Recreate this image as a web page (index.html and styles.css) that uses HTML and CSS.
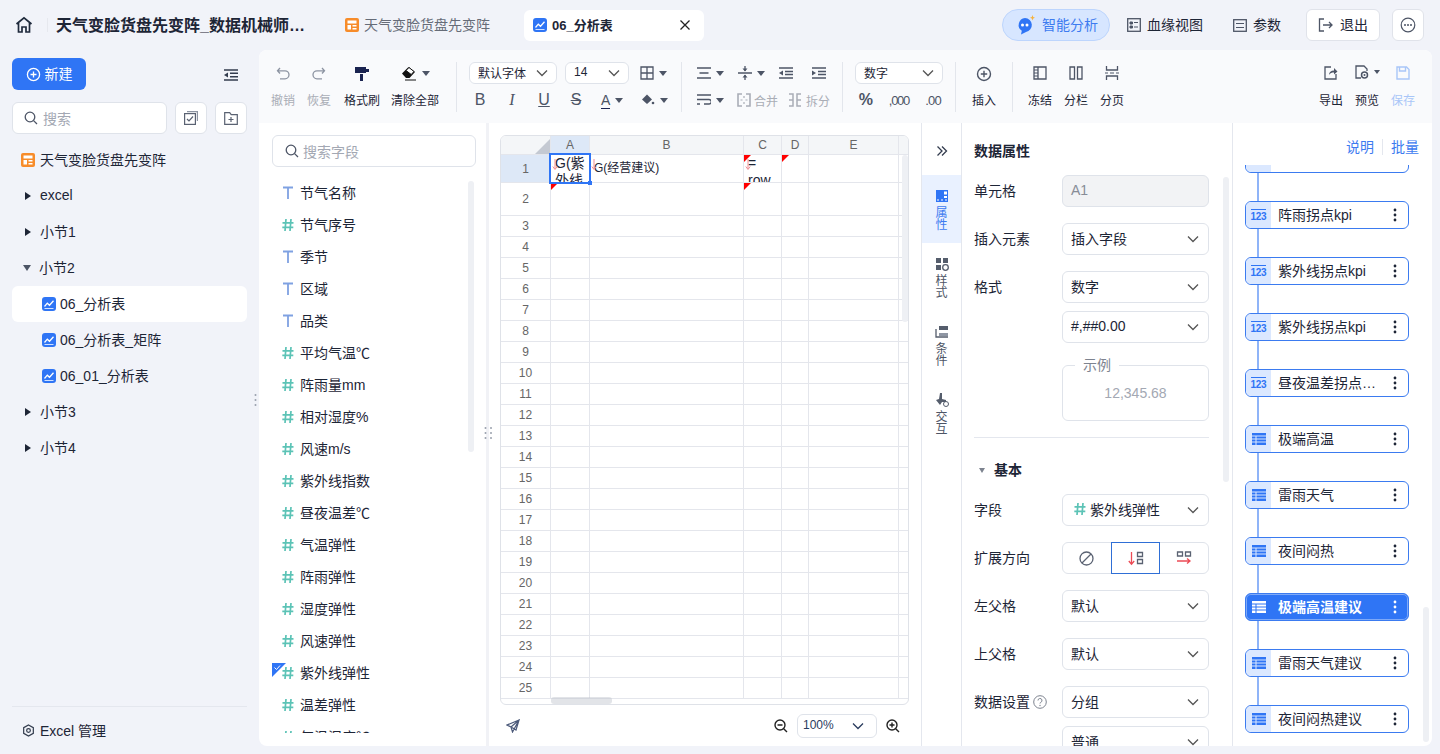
FILE: index.html
```html
<!DOCTYPE html>
<html lang="zh-CN">
<head>
<meta charset="utf-8">
<title>06_分析表</title>
<link rel="stylesheet" href="styles.css">
</head>
<body>
<svg class="defs" xmlns="http://www.w3.org/2000/svg">
  <symbol id="chev" viewBox="0 0 14 14"><path d="M2 4.500 7 9.500 12 4.500" fill="none" stroke="currentColor" stroke-width="1.300"/></symbol>
  <symbol id="search" viewBox="0 0 14 14"><circle cx="6" cy="6" r="4.800" fill="none" stroke="currentColor" stroke-width="1.300"/><path d="M9.600 9.600 13 13" stroke="currentColor" stroke-width="1.300"/></symbol>
  <symbol id="orange" viewBox="0 0 14 14"><rect width="14" height="14" rx="2" fill="#f78c2a"/><path d="M2.500 2.500h9v3h-9zM2.500 7h3.500v4.500h-3.500zM7.500 7h4v1.500h-4zM7.500 10h4v1.500h-4z" fill="#fff"/></symbol>
  <symbol id="chart" viewBox="0 0 14 14"><rect width="14" height="14" rx="3" fill="#2f75f5"/><path d="M2.500 9.500 5.300 6.200 7.500 8.300 11.500 3.800" fill="none" stroke="#fff" stroke-width="1.300"/><path d="M2.500 11.500h9" stroke="#cfe0ff" stroke-width="1"/></symbol>
  <symbol id="T" viewBox="0 0 12 14"><path d="M1 1.500h10M6 1.500V13" fill="none" stroke="#7fa1e2" stroke-width="1.800"/></symbol>
  <symbol id="hash" viewBox="0 0 12 14"><path d="M4 1 3 13M9 1 8 13M.5 4.800h11M.3 9.300h11" fill="none" stroke="#5cc3b6" stroke-width="1.700"/></symbol>
  <symbol id="dots" viewBox="0 0 4 14"><circle cx="2" cy="2" r="1.400" fill="currentColor"/><circle cx="2" cy="7" r="1.400" fill="currentColor"/><circle cx="2" cy="12" r="1.400" fill="currentColor"/></symbol>
  <symbol id="tbl" viewBox="0 0 14 12"><path d="M0 0h14v2.500H0zM0 3.500h3.500v2H0zM4.500 3.500H14v2H4.500zM0 6.500h3.500v2H0zM4.500 6.500H14v2H4.500zM0 9.500h3.500V12H0zM4.500 9.500H14V12H4.500z" fill="currentColor"/></symbol>
  <symbol id="darrow" viewBox="0 0 6 12"><path d="M3 0v10M.8 7.500 3 10.500 5.200 7.500" fill="none" stroke="#ee8f97" stroke-width="1"/></symbol>
  <symbol id="plus-c" viewBox="0 0 16 16"><circle cx="8" cy="8" r="6.500" fill="none" stroke="currentColor" stroke-width="1.400"/><path d="M8 4.800v6.400M4.800 8h6.400" stroke="currentColor" stroke-width="1.400"/></symbol>
</svg>

<div class="app">
  <header class="header">
    <svg class="home" width="18" height="18" viewBox="0 0 18 18"><path d="M1.500 8 9 1.800 16.500 8M3.500 7v9h3.500v-5h4v5h3.500V7" fill="none" stroke="#1f2a3c" stroke-width="1.700"/></svg>
    <span class="hsep"></span>
    <div class="title">天气变脸货盘先变阵_数据机械师…</div>
    <div class="tab"><svg width="14" height="14"><use href="#orange"/></svg><span>天气变脸货盘先变阵</span></div>
    <div class="tab tab-active"><svg width="14" height="14"><use href="#chart"/></svg><span>06_分析表</span>
      <svg class="tab-x" width="10" height="10" viewBox="0 0 10 10"><path d="M.5.500l9 9M9.500.500l-9 9" stroke="#222" stroke-width="1.300"/></svg></div>
    <div class="hright">
      <div class="ai">
        <svg width="20" height="20" viewBox="0 0 20 20"><path d="M9 3a7 7 0 0 1 1 13.900L5 19.500l.8-3.700A7 7 0 0 1 9 3z" fill="#2f75f5"/><circle cx="6.500" cy="10" r="1.500" fill="#fff"/><circle cx="11" cy="10" r="1.500" fill="#fff"/><path d="M16.500 0l.7 2 1.800.7-1.800.7-.7 2-.7-2-1.800-.7 1.800-.7z" fill="#f6b23c"/></svg>
        <span>智能分析</span>
      </div>
      <div class="hlink hl-1"><svg width="14" height="14" viewBox="0 0 14 14"><rect x=".7" y=".7" width="12.600" height="12.600" fill="none" stroke="#4d5566" stroke-width="1.300"/><path d="M3 4h2.500v2H3zM3 8h2.500v2H3zM7 4.500h4M7 9h4" stroke="#4d5566" fill="#4d5566"/></svg><span>血缘视图</span></div>
      <div class="hlink hl-2"><svg width="14" height="13" viewBox="0 0 14 13"><rect x=".7" y=".7" width="12.600" height="11.600" fill="none" stroke="#4d5566" stroke-width="1.300"/><path d="M3 4.500h8M3 8.500h8" stroke="#4d5566" stroke-width="1.200"/></svg><span>参数</span></div>
      <button class="hbtn hbtn-exit"><svg width="16" height="14" viewBox="0 0 16 14"><path d="M6 1H1.500v12H6M5 7h9M11 4l3 3-3 3" fill="none" stroke="#4d5566" stroke-width="1.300"/></svg><span>退出</span></button>
      <button class="hbtn hbtn-more"><svg width="16" height="16" viewBox="0 0 16 16"><circle cx="8" cy="8" r="6.800" fill="none" stroke="#4d5566" stroke-width="1.200"/><circle cx="5" cy="8" r="1" fill="#4d5566"/><circle cx="8" cy="8" r="1" fill="#4d5566"/><circle cx="11" cy="8" r="1" fill="#4d5566"/></svg></button>
    </div>
  </header>

  <div class="main">
    <aside class="sidebar">
      <div class="side-top">
        <button class="new-btn"><svg width="15" height="15"><use href="#plus-c"/></svg><span>新建</span></button>
        <svg width="14" height="12" viewBox="0 0 14 12" class="collapse"><path d="M0 1h14M6 4.300h8M6 7.700h8M0 11h14" stroke="#333c4e" stroke-width="1.400"/><path d="M4 3.500v5L0 6z" fill="#333c4e"/></svg>
      </div>
      <div class="side-search">
        <div class="search side-input"><svg width="14" height="14"><use href="#search"/></svg><span>搜索</span></div>
        <button class="sq"><svg width="14" height="14" viewBox="0 0 14 14"><rect x=".6" y="2.600" width="10.800" height="10.800" fill="none" stroke="#5a6272" stroke-width="1.200"/><path d="M3 8l2 2 4-4.500" fill="none" stroke="#5a6272" stroke-width="1.200"/><path d="M3 .6h10.400V10" fill="none" stroke="#8d94a2" stroke-width="1.200"/></svg></button>
        <button class="sq"><svg width="14" height="13" viewBox="0 0 14 13"><path d="M.7.700h5l1.500 2h6.100v9.600H.7z" fill="none" stroke="#5a6272" stroke-width="1.200"/><path d="M7 5v5M4.500 7.500h5" stroke="#5a6272" stroke-width="1.200"/></svg></button>
      </div>
      <ul class="tree">
        <li class="ti ti-root"><svg width="14" height="14"><use href="#orange"/></svg><span>天气变脸货盘先变阵</span></li>
        <li class="ti"><i class="tri"></i><span>excel</span></li>
        <li class="ti"><i class="tri"></i><span>小节1</span></li>
        <li class="ti"><i class="tri tri-down"></i><span>小节2</span></li>
        <li class="ti ti-child ti-on"><svg width="14" height="14"><use href="#chart"/></svg><span>06_分析表</span></li>
        <li class="ti ti-child"><svg width="14" height="14"><use href="#chart"/></svg><span>06_分析表_矩阵</span></li>
        <li class="ti ti-child"><svg width="14" height="14"><use href="#chart"/></svg><span>06_01_分析表</span></li>
        <li class="ti"><i class="tri"></i><span>小节3</span></li>
        <li class="ti"><i class="tri"></i><span>小节4</span></li>
      </ul>
      <div class="side-foot"><svg width="13" height="13" viewBox="0 0 14 14"><path d="M7 1l5.200 3v6L7 13l-5.200-3V4z" fill="none" stroke="#333c4e" stroke-width="1.300"/><circle cx="7" cy="7" r="2" fill="none" stroke="#333c4e" stroke-width="1.300"/></svg><span>Excel 管理</span></div>
      <svg class="grip grip-side" width="3" height="14" viewBox="0 0 3 14"><g fill="#9aa1ad"><circle cx="1.500" cy="2" r="1"/><circle cx="1.500" cy="7" r="1"/><circle cx="1.500" cy="12" r="1"/></g></svg>
    </aside>

    <section class="card">
      <div class="toolbar">
        <div class="tg tg1">
          <div class="tool off"><svg width="16" height="16" viewBox="0 0 16 16"><path d="M5 2 2.500 4.800 5 7.500M2.500 4.800H10a4 4 0 0 1 0 8H5" fill="none" stroke="#8d94a2" stroke-width="1.300"/></svg><span>撤销</span></div>
          <div class="tool off"><svg width="16" height="16" viewBox="0 0 16 16"><path d="M11 2l2.500 2.800L11 7.500M13.500 4.800H6a4 4 0 0 0 0 8h5" fill="none" stroke="#8d94a2" stroke-width="1.300"/></svg><span>恢复</span></div>
          <div class="tool tool-brush"><svg width="16" height="16" viewBox="0 0 16 16"><path d="M1 1h11v2h3v3H12v1H1zM6 8h3v7H6z" fill="#1a2350"/></svg><span>格式刷</span></div>
          <div class="tool tool-wide"><div class="ticon"><svg width="16" height="16" viewBox="0 0 16 16"><path d="M1 8.500 7.500 2l6.500 5-5.500 6H5z" fill="#111"/><path d="M5 5.500 8 2.500l5 4-2.800 3z" fill="#fff" stroke="#111"/><path d="M4 15h11" stroke="#111"/></svg><i class="caret"></i></div><span>清除全部</span></div>
        </div>
        <span class="sep"></span>
        <div class="tg tg2">
          <div class="trow">
            <div class="tsel w88"><span>默认字体</span><svg width="14" height="14"><use href="#chev"/></svg></div>
            <div class="tsel w64"><span>14</span><svg width="14" height="14"><use href="#chev"/></svg></div>
            <div class="ticon ml10"><svg width="14" height="14" viewBox="0 0 14 14"><path d="M1 1h12v12H1zM7 1v12M1 7h12" fill="none" stroke="#4d5566" stroke-width="1.300"/></svg><i class="caret"></i></div>
          </div>
          <div class="trow trow2">
            <span class="fmt">B</span><span class="fmt fmt-i">I</span><span class="fmt fmt-u">U</span><span class="fmt fmt-s">S</span>
            <div class="ticon w30"><span class="fmt-a">A</span><i class="caret"></i></div>
            <div class="ticon fill"><svg width="14" height="14" viewBox="0 0 14 14"><path d="M1 6.500 6 1.500l5 5-5 4.500z" fill="#4d5566"/><circle cx="12" cy="10" r="1.300" fill="#4d5566"/></svg><i class="caret"></i></div>
          </div>
        </div>
        <span class="sep"></span>
        <div class="tg tg3">
          <div class="trow row3a">
            <div class="ticon"><svg width="14" height="12" viewBox="0 0 14 12"><path d="M0 1h14M2.500 6h9M0 11h14" stroke="#4d5566" stroke-width="1.300"/></svg><i class="caret"></i></div>
            <div class="ticon"><svg width="14" height="14" viewBox="0 0 14 14"><path d="M0 7h14M7 0v5M7 9v5" stroke="#4d5566" stroke-width="1.300"/><path d="M4.500 2.500h5L7 5.500zM4.500 11.500h5L7 8.500z" fill="#4d5566"/></svg><i class="caret"></i></div>
            <svg class="ind" width="14" height="12" viewBox="0 0 14 12"><path d="M0 1h14M6 4.500h8M6 7.500h8M0 11h14" stroke="#4d5566" stroke-width="1.300"/><path d="M4 3.500v5L0 6z" fill="#4d5566"/></svg>
            <svg class="ind" width="14" height="12" viewBox="0 0 14 12"><path d="M0 1h14M6 4.500h8M6 7.500h8M0 11h14" stroke="#4d5566" stroke-width="1.300"/><path d="M0 3.500v5L4 6z" fill="#4d5566"/></svg>
          </div>
          <div class="trow row3b">
            <div class="ticon"><svg width="14" height="12" viewBox="0 0 14 12"><path d="M0 1h14M0 5.500h12a2.200 2.200 0 0 1 0 4.500H7M0 10h3" fill="none" stroke="#4d5566" stroke-width="1.300"/></svg><i class="caret"></i></div>
            <div class="ticon merge off"><svg width="14" height="14" viewBox="0 0 14 14"><path d="M5 1H1v12h4M9 1h4v12H9" fill="none" stroke="currentColor" stroke-width="1.600"/><path d="M3.500 7h2M8.500 7h2M7 3v2M7 9v2" stroke="currentColor" stroke-width="1.200"/></svg><span>合并</span></div>
            <div class="ticon split off"><svg width="14" height="14" viewBox="0 0 14 14"><path d="M1 1h4v12H1M1 7h4M13 1H9v12h4M9 7h4" fill="none" stroke="currentColor" stroke-width="1.500"/></svg><span>拆分</span></div>
          </div>
        </div>
        <span class="sep"></span>
        <div class="tg tg4">
          <div class="trow"><div class="tsel w88"><span>数字</span><svg width="14" height="14"><use href="#chev"/></svg></div></div>
          <div class="trow trow2 numfmt"><span class="n1">%</span><span class="n2">,000</span><span class="n3">.00</span></div>
        </div>
        <span class="sep"></span>
        <div class="tool tool-ins"><svg width="16" height="16" class="ic-gray"><use href="#plus-c"/></svg><span>插入</span></div>
        <span class="sep"></span>
        <div class="tg tg6">
          <div class="tool"><svg width="14" height="14" viewBox="0 0 14 14"><path d="M1 1h12v12H1zM5 1v12" fill="none" stroke="#4d5566" stroke-width="1.300"/><path d="M1 4h4M1 7h4M1 10h4" stroke="#4d5566"/></svg><span>冻结</span></div>
          <div class="tool"><svg width="14" height="14" viewBox="0 0 14 14"><path d="M1 1h4.500v12H1zM8.500 1H13v12H8.500z" fill="none" stroke="#4d5566" stroke-width="1.300"/></svg><span>分栏</span></div>
          <div class="tool"><svg width="14" height="14" viewBox="0 0 14 14"><path d="M1.500 0v4h11V0M1.500 14v-4h11v4" fill="none" stroke="#4d5566" stroke-width="1.300"/><path d="M0 7h3M5 7h4M11 7h3" stroke="#4d5566" stroke-width="1.200"/></svg><span>分页</span></div>
        </div>
        <div class="tg tg7">
          <div class="tool"><svg width="14" height="14" viewBox="0 0 14 14"><path d="M7 1H1v12h11V8" fill="none" stroke="#4d5566" stroke-width="1.300"/><path d="M5 9c0-3 2-4.500 5-4.500V2l3.500 3.500L10 8.500V6.500C8 6.500 6 7 5 9z" fill="#4d5566"/></svg><span>导出</span></div>
          <div class="tool"><div class="ticon"><svg width="14" height="14" viewBox="0 0 14 14"><path d="M6 13H1V1h8l3 3v2" fill="none" stroke="#4d5566" stroke-width="1.300"/><circle cx="9.500" cy="10" r="3" fill="none" stroke="#4d5566" stroke-width="1.500"/><circle cx="9.500" cy="10" r="1" fill="#4d5566"/></svg><i class="caret caret-s"></i></div><span>预览</span></div>
          <div class="tool save"><svg width="14" height="14" viewBox="0 0 14 14"><path d="M1 1h9.500L13 3.500V13H1z" fill="none" stroke="#a9c6f8" stroke-width="1.400"/><path d="M3.500 1v4h6V1" fill="none" stroke="#a9c6f8" stroke-width="1.400"/></svg><span>保存</span></div>
        </div>
      </div>

      <div class="work">
        <div class="fields">
          <div class="search field-search"><svg width="14" height="14"><use href="#search"/></svg><span>搜索字段</span></div>
          <ul class="flist">
            <li><svg width="12" height="14"><use href="#T"/></svg>节气名称</li>
            <li><svg width="12" height="14"><use href="#hash"/></svg>节气序号</li>
            <li><svg width="12" height="14"><use href="#T"/></svg>季节</li>
            <li><svg width="12" height="14"><use href="#T"/></svg>区域</li>
            <li><svg width="12" height="14"><use href="#T"/></svg>品类</li>
            <li><svg width="12" height="14"><use href="#hash"/></svg>平均气温℃</li>
            <li><svg width="12" height="14"><use href="#hash"/></svg>阵雨量mm</li>
            <li><svg width="12" height="14"><use href="#hash"/></svg>相对湿度%</li>
            <li><svg width="12" height="14"><use href="#hash"/></svg>风速m/s</li>
            <li><svg width="12" height="14"><use href="#hash"/></svg>紫外线指数</li>
            <li><svg width="12" height="14"><use href="#hash"/></svg>昼夜温差℃</li>
            <li><svg width="12" height="14"><use href="#hash"/></svg>气温弹性</li>
            <li><svg width="12" height="14"><use href="#hash"/></svg>阵雨弹性</li>
            <li><svg width="12" height="14"><use href="#hash"/></svg>湿度弹性</li>
            <li><svg width="12" height="14"><use href="#hash"/></svg>风速弹性</li>
            <li class="checked"><svg class="flag" width="14" height="14" viewBox="0 0 14 14"><path d="M0 0h14L0 14z" fill="#2f75f5"/><path d="M2.500 4.500 4.500 6.500 8 2.500" fill="none" stroke="#fff"/></svg><svg width="12" height="14"><use href="#hash"/></svg>紫外线弹性</li>
            <li><svg width="12" height="14"><use href="#hash"/></svg>温差弹性</li>
            <li><svg width="12" height="14"><use href="#hash"/></svg>气温湿度℃</li>
          </ul>
          <i class="sb sb-fields"></i>
          <svg class="grip grip-field" width="9" height="14" viewBox="0 0 9 14"><g fill="#9aa1ad"><circle cx="1.500" cy="2" r="1"/><circle cx="1.500" cy="7" r="1"/><circle cx="1.500" cy="12" r="1"/><circle cx="7" cy="2" r="1"/><circle cx="7" cy="7" r="1"/><circle cx="7" cy="12" r="1"/></g></svg>
        </div>

        <div class="gridpane">
          <div class="gridbox">
            <table class="sheet">
              <colgroup><col class="c0"><col class="c1"><col class="c2"><col class="c3"><col class="c4"><col class="c5"><col class="c6"></colgroup>
              <thead><tr><th class="corner"><i></i></th><th class="hl">A</th><th>B</th><th>C</th><th>D</th><th>E</th><th class="tail"></th></tr></thead>
              <tbody>
                <tr class="r1"><th class="hl">1</th>
                  <td class="a1"><div class="cell big"><svg class="arr" width="6" height="12"><use href="#darrow"/></svg>G(紫外线</div><i class="selbox"></i><i class="handle"></i></td>
                  <td><div class="cell small"><svg class="arr" width="6" height="12"><use href="#darrow"/></svg>G(经营建议)</div></td>
                  <td class="mark"><div class="cell big c1txt"><svg class="arr" width="6" height="12"><use href="#darrow"/></svg>=<br>row</div></td>
                  <td class="mark"></td><td></td><td></td></tr>
                <tr class="r2"><th>2</th><td class="mark"></td><td></td><td class="mark"></td><td></td><td></td><td></td></tr>
                <tr><th>3</th><td></td><td></td><td></td><td></td><td></td><td></td></tr>
                <tr><th>4</th><td></td><td></td><td></td><td></td><td></td><td></td></tr>
                <tr><th>5</th><td></td><td></td><td></td><td></td><td></td><td></td></tr>
                <tr><th>6</th><td></td><td></td><td></td><td></td><td></td><td></td></tr>
                <tr><th>7</th><td></td><td></td><td></td><td></td><td></td><td></td></tr>
                <tr><th>8</th><td></td><td></td><td></td><td></td><td></td><td></td></tr>
                <tr><th>9</th><td></td><td></td><td></td><td></td><td></td><td></td></tr>
                <tr><th>10</th><td></td><td></td><td></td><td></td><td></td><td></td></tr>
                <tr><th>11</th><td></td><td></td><td></td><td></td><td></td><td></td></tr>
                <tr><th>12</th><td></td><td></td><td></td><td></td><td></td><td></td></tr>
                <tr><th>13</th><td></td><td></td><td></td><td></td><td></td><td></td></tr>
                <tr><th>14</th><td></td><td></td><td></td><td></td><td></td><td></td></tr>
                <tr><th>15</th><td></td><td></td><td></td><td></td><td></td><td></td></tr>
                <tr><th>16</th><td></td><td></td><td></td><td></td><td></td><td></td></tr>
                <tr><th>17</th><td></td><td></td><td></td><td></td><td></td><td></td></tr>
                <tr><th>18</th><td></td><td></td><td></td><td></td><td></td><td></td></tr>
                <tr><th>19</th><td></td><td></td><td></td><td></td><td></td><td></td></tr>
                <tr><th>20</th><td></td><td></td><td></td><td></td><td></td><td></td></tr>
                <tr><th>21</th><td></td><td></td><td></td><td></td><td></td><td></td></tr>
                <tr><th>22</th><td></td><td></td><td></td><td></td><td></td><td></td></tr>
                <tr><th>23</th><td></td><td></td><td></td><td></td><td></td><td></td></tr>
                <tr><th>24</th><td></td><td></td><td></td><td></td><td></td><td></td></tr>
                <tr><th>25</th><td></td><td></td><td></td><td></td><td></td><td></td></tr>
              </tbody>
            </table>
            <i class="sb sb-h"></i>
            <i class="sb sb-v"></i>
          </div>
          <div class="zoombar">
            <svg width="14" height="14" viewBox="0 0 14 14"><path d="M13 1 1 6l4 2 1.500 5zM13 1 5 8M13 1l-3 10-4-2.500" fill="none" stroke="#4c5a7a" stroke-width="1.200"/></svg>
            <div class="zoomctl">
              <svg width="14" height="14" viewBox="0 0 14 14"><circle cx="6" cy="6" r="5" fill="none" stroke="#222" stroke-width="1.400"/><path d="M9.700 9.700 13 13M3.500 6h5" stroke="#222" stroke-width="1.400"/></svg>
              <div class="zoomsel"><span>100%</span><svg width="14" height="14"><use href="#chev"/></svg></div>
              <svg width="14" height="14" viewBox="0 0 14 14"><circle cx="6" cy="6" r="5" fill="none" stroke="#222" stroke-width="1.400"/><path d="M9.700 9.700 13 13M3.500 6h5M6 3.500v5" stroke="#222" stroke-width="1.400"/></svg>
            </div>
          </div>
        </div>

        <nav class="sidetabs">
          <svg class="dbl" width="12" height="12" viewBox="0 0 12 12"><path d="M1.500 1.500 6 6l-4.500 4.500M6 1.500 10.500 6 6 10.500" fill="none" stroke="#333c4e" stroke-width="1.300"/></svg>
          <div class="stab on"><svg width="14" height="14" viewBox="0 0 14 14"><path d="M1 1h12v12H1z" fill="#2f75f5"/><path d="M9 2.500h3v3H9zM9 7h3v2H9zM2 10.500h2v1H2zM6 10.500h2v1H6zM10 10.500h2v1h-2z" fill="#fff"/></svg><span>属<br>性</span></div>
          <div class="stab"><svg width="14" height="14" viewBox="0 0 14 14"><path d="M1 1h5v5H1zM8 1h5v5H8zM1 8h5v5H1z" fill="#555d6c"/><circle cx="10.500" cy="10.500" r="2.800" fill="none" stroke="#555d6c" stroke-width="1.300"/></svg><span>样<br>式</span></div>
          <div class="stab"><svg width="14" height="14" viewBox="0 0 14 14"><path d="M4 1h9v4H4z" fill="#555d6c"/><path d="M1 4v8h12" fill="none" stroke="#555d6c" stroke-width="1.300"/><path d="M4 8h9v3H4z" fill="#8f96a3"/></svg><span>条<br>件</span></div>
          <div class="stab"><svg width="14" height="14" viewBox="0 0 14 14"><path d="M5 0h2v6l4 1v2H7l-2 3-4-5 3-1z" fill="#555d6c"/><circle cx="11" cy="11" r="2.500" fill="none" stroke="#555d6c"/></svg><span>交<br>互</span></div>
        </nav>

        <div class="props">
          <h3 class="ph">数据属性</h3>
          <div class="prow"><label>单元格</label><div class="sel sel-dis"><span>A1</span></div></div>
          <div class="prow"><label>插入元素</label><div class="sel"><span>插入字段</span><svg width="14" height="14"><use href="#chev"/></svg></div></div>
          <div class="prow prow-tight"><label>格式</label><div class="sel"><span>数字</span><svg width="14" height="14"><use href="#chev"/></svg></div></div>
          <div class="prow prow-fmt"><label></label><div class="sel"><span>#,##0.00</span><svg width="14" height="14"><use href="#chev"/></svg></div></div>
          <fieldset class="sample"><legend>示例</legend><div>12,345.68</div></fieldset>
          <hr class="pdiv">
          <h3 class="pgroup"><i class="tri-g"></i>基本</h3>
          <div class="prow"><label>字段</label><div class="sel"><span class="fieldval"><svg width="12" height="14"><use href="#hash"/></svg>紫外线弹性</span><svg width="14" height="14"><use href="#chev"/></svg></div></div>
          <div class="prow"><label>扩展方向</label>
            <div class="seg">
              <span><svg width="15" height="15" viewBox="0 0 15 15"><circle cx="7.500" cy="7.500" r="6.500" fill="none" stroke="#5a6272" stroke-width="1.300"/><path d="M3 12 12 3" stroke="#5a6272" stroke-width="1.300"/></svg></span>
              <span class="seg-on"><svg width="16" height="15" viewBox="0 0 16 15"><path d="M3.500 1v12M.8 10l2.700 3.200L6.200 10" fill="none" stroke="#ec4b55" stroke-width="1.300"/><path d="M9.500 1.500h5v4h-5zM9.500 8.500h5v4h-5z" fill="none" stroke="#5a6272" stroke-width="1.300"/></svg></span>
              <span><svg width="16" height="15" viewBox="0 0 16 15"><path d="M1.500 1h5v4h-5zM9.500 1h5v4h-5z" fill="none" stroke="#5a6272" stroke-width="1.300"/><path d="M1 10h13M11 7.500l3 2.500-3 2.500" fill="none" stroke="#ec4b55" stroke-width="1.300"/></svg></span>
            </div></div>
          <div class="prow"><label>左父格</label><div class="sel"><span>默认</span><svg width="14" height="14"><use href="#chev"/></svg></div></div>
          <div class="prow"><label>上父格</label><div class="sel"><span>默认</span><svg width="14" height="14"><use href="#chev"/></svg></div></div>
          <div class="prow prow-tight"><label><span>数据设置</span><svg class="help" width="14" height="14" viewBox="0 0 14 14"><circle cx="7" cy="7" r="6.300" fill="none" stroke="#7d838f"/><path d="M5 5.500a2 2 0 1 1 2.800 1.800c-.6.300-.8.600-.8 1.200" fill="none" stroke="#7d838f"/><circle cx="7" cy="10.500" r=".7" fill="#7d838f"/></svg></label><div class="sel"><span>分组</span><svg width="14" height="14"><use href="#chev"/></svg></div></div>
          <div class="prow"><label></label><div class="sel"><span>普通</span><svg width="14" height="14"><use href="#chev"/></svg></div></div>
          <i class="sb sb-props"></i>
        </div>

        <div class="treepane">
          <div class="tp-head"><a>说明</a><i></i><a>批量</a></div>
          <div class="nodes">
            <div class="node node-first"><span class="nic"></span></div><i class="link"></i>
            <div class="node"><span class="nic nic-num">123</span><span class="ntx">阵雨拐点kpi</span><svg class="nd" width="4" height="14"><use href="#dots"/></svg></div><i class="link"></i>
            <div class="node"><span class="nic nic-num">123</span><span class="ntx">紫外线拐点kpi</span><svg class="nd" width="4" height="14"><use href="#dots"/></svg></div><i class="link"></i>
            <div class="node"><span class="nic nic-num">123</span><span class="ntx">紫外线拐点kpi</span><svg class="nd" width="4" height="14"><use href="#dots"/></svg></div><i class="link"></i>
            <div class="node"><span class="nic nic-num">123</span><span class="ntx">昼夜温差拐点…</span><svg class="nd" width="4" height="14"><use href="#dots"/></svg></div><i class="link"></i>
            <div class="node"><span class="nic"><svg width="14" height="12"><use href="#tbl"/></svg></span><span class="ntx">极端高温</span><svg class="nd" width="4" height="14"><use href="#dots"/></svg></div><i class="link"></i>
            <div class="node"><span class="nic"><svg width="14" height="12"><use href="#tbl"/></svg></span><span class="ntx">雷雨天气</span><svg class="nd" width="4" height="14"><use href="#dots"/></svg></div><i class="link"></i>
            <div class="node"><span class="nic"><svg width="14" height="12"><use href="#tbl"/></svg></span><span class="ntx">夜间闷热</span><svg class="nd" width="4" height="14"><use href="#dots"/></svg></div><i class="link"></i>
            <div class="node node-on"><span class="nic"><svg width="14" height="12"><use href="#tbl"/></svg></span><span class="ntx">极端高温建议</span><svg class="nd" width="4" height="14"><use href="#dots"/></svg></div><i class="link"></i>
            <div class="node"><span class="nic"><svg width="14" height="12"><use href="#tbl"/></svg></span><span class="ntx">雷雨天气建议</span><svg class="nd" width="4" height="14"><use href="#dots"/></svg></div><i class="link"></i>
            <div class="node"><span class="nic"><svg width="14" height="12"><use href="#tbl"/></svg></span><span class="ntx">夜间闷热建议</span><svg class="nd" width="4" height="14"><use href="#dots"/></svg></div>
          </div>
          <i class="sb sb-tree"></i>
        </div>
      </div>
    </section>
  </div>
</div>
</body>
</html>
```

FILE: styles.css
```css
* { box-sizing: border-box; }
html, body { margin: 0; height: 100%; }
body {
  font-family: "Liberation Sans", "Noto Sans CJK SC", sans-serif;
  font-size: 14px;
  color: #1d2536;
  background: #f1f3f9;
  overflow: hidden;
}
ul { list-style: none; margin: 0; padding: 0; }
button { font: inherit; color: inherit; }
i { display: block; font-style: normal; }
svg { flex: none; display: block; }
.defs { position: absolute; width: 0; height: 0; }
.app { width: 1440px; height: 754px; display: flex; flex-direction: column; overflow: hidden; }

.tab > span, .ai > span, .hlink > span, .hbtn > span, .new-btn > span,
.ti > span, .side-foot > span, .tsel > span, .sel > span, .ntx, .prow label, .zoomsel > span { margin-top: -2px; }

/* header */
.header { height: 50px; display: flex; align-items: center; flex: none; }
.home { margin-left: 15px; }
.hsep { width: 1px; height: 14px; background: #e6e8ee; margin-left: 14px; }
.title { margin-left: 8px; width: 250px; font-size: 16px; font-weight: 700; white-space: nowrap; overflow: hidden; padding-bottom: 2px; }
.tab { display: flex; align-items: center; gap: 5px; margin-left: 39px; color: #666c78; height: 31px; }
.tab-active {
  margin-left: 34px; width: 180px; padding: 0 14px 0 9px; background: #fff;
  border-radius: 6px; color: #1d2536; font-weight: 700; font-size: 13px; position: relative;
}
.tab-x { margin-left: auto; }
.hright { margin-left: auto; display: flex; align-items: center; padding-right: 16px; }
.ai {
  width: 108px; height: 32px; border-radius: 16px; background: #d7e6ff; border: 1px solid #bdd5fd;
  display: flex; align-items: center; gap: 6px; padding-left: 13px; color: #3d7bf0;
}
.hlink { display: flex; align-items: center; gap: 6px; }
.hl-1 { margin-left: 17px; }
.hl-2 { margin-left: 30px; }
.hbtn {
  height: 32px; background: #fff; border: 1px solid #e0e3ea; border-radius: 6px;
  display: flex; align-items: center; justify-content: center; gap: 6px; padding: 0;
}
.hbtn-exit { width: 74px; margin-left: 25px; }
.hbtn-more { width: 32px; margin-left: 12px; }

.main { flex: 1; display: flex; min-height: 0; }

/* sidebar */
.sidebar { width: 259px; flex: none; padding: 8px 12px 0; display: flex; flex-direction: column; position: relative; }
.side-top { display: flex; align-items: center; justify-content: space-between; padding-right: 9px; }
.new-btn {
  width: 74px; height: 32px; background: #2f75f5; color: #fff; border: 0; border-radius: 6px;
  display: flex; align-items: center; justify-content: center; gap: 4px;
}
.collapse { margin-top: 1px; }
.side-search { display: flex; gap: 8px; margin-top: 12px; }
.search {
  height: 32px; background: #fff; border: 1px solid #dfe3ea; border-radius: 6px;
  display: flex; align-items: center; gap: 5px; padding-left: 11px; color: #a3a8b3;
}
.search svg { color: #4d5566; }
.side-input { width: 155px; }
.sq { width: 32px; height: 32px; background: #fff; border: 1px solid #dfe3ea; border-radius: 6px; display: flex; align-items: center; justify-content: center; padding: 0; }
.tree { margin-top: 8px; }
.ti { height: 36px; display: flex; align-items: center; padding-left: 13px; }
.ti > span { margin-left: 8px; }
.ti-root { padding-left: 9px; }
.ti-root > span { margin-left: 5px; }
.ti-child { padding-left: 30px; }
.ti-child > span { margin-left: 4px; }
.ti-on { background: #fff; border-radius: 6px; }
.tri { width: 0; height: 0; border-style: solid; border-width: 4.5px 0 4.5px 6px; border-color: transparent transparent transparent #1d2536; margin-right: 1px; }
.tri-down { border-width: 6px 4.5px 0; border-color: #4d5566 transparent transparent; margin-right: 0; margin-left: -2px; }
.side-foot { margin-top: auto; height: 48px; border-top: 1px solid #e4e7ee; display: flex; align-items: center; gap: 5px; padding-left: 10px; }
.grip { position: absolute; }
.grip-side { left: 254px; top: 343px; }

/* card */
.card { width: 1173px; height: 696px; background: #fff; border-radius: 8px; overflow: hidden; display: flex; flex-direction: column; }
.toolbar { height: 73px; flex: none; background: #f9fafc; display: flex; padding: 12px 17px 0 12px; }
.sep { width: 1px; height: 50px; background: #e3e6ec; margin: 0 12px; flex: none; }
.tg { display: flex; flex: none; }
.tg1 { width: 173px; gap: 12px; }
.tool { display: flex; flex-direction: column; align-items: center; font-size: 12px; height: 50px; justify-content: space-between; padding: 3px 0 3px; line-height: 16px; width: 24px; white-space: nowrap; }
.tool > svg { margin-top: 1px; }
.tool-brush { width: 36px; margin: 0 -1px 0 1px; }
.tool-wide { width: 48px; }
.off { color: #a9adb6; }
.ticon { display: flex; align-items: center; gap: 5px; }
.caret { width: 0; height: 0; border-style: solid; border-width: 5px 4.5px 0; border-color: #4d5566 transparent transparent; }
.caret-s { border-width: 4px 3.5px 0; }
.tg2, .tg3, .tg4 { flex-direction: column; justify-content: space-between; height: 50px; }
.tg2 { width: 200px; }
.tg3 { width: 136px; padding-left: 3px; }
.tg4 { width: 88px; }
.trow { display: flex; align-items: center; height: 22px; }
.trow2, .row3b { height: 22px; margin-bottom: 1px; }
.tsel {
  height: 22px; background: #fff; border: 1px solid #dfe3ea; border-radius: 6px; font-size: 12px;
  display: flex; align-items: center; justify-content: space-between; padding: 0 7px 0 8px;
}
.tsel svg { color: #555; }
.w88 { width: 88px; }
.w64 { width: 64px; margin-left: 8px; }
.ml10 { margin-left: 11px; }
.fmt { width: 22px; margin-right: 10px; text-align: center; font-size: 16px; color: #4d5566; }
.fmt-i { font-style: italic; font-family: "Liberation Serif", serif; }
.fmt-u { text-decoration: underline; }
.fmt-s { text-decoration: line-through; }
.w30 { width: 30px; padding-left: 4px; margin-right: 14px; }
.fmt-a { font-size: 14px; color: #4d5566; border-bottom: 1px solid #1a2350; line-height: 16px; }
.fill { gap: 5px; }
.row3a .ticon:nth-child(1) { margin-right: 14px; }
.row3a .ticon:nth-child(2) { margin-right: 14px; }
.ind:nth-child(3) { margin-right: 19px; }
.row3b .ticon:nth-child(1) { margin-right: 13px; }
.merge, .split { font-size: 12px; gap: 3px; }
.split { gap: 4px; }
.merge { margin-right: 10px; }
.numfmt { position: relative; font-size: 13px; color: #4d5566; }
.n1 { font-size: 16px; width: 24px; text-align: center; font-weight: 700; }
.n2 { width: 32px; text-align: center; margin-left: 8px; letter-spacing: -1.300px; }
.n3 { width: 24px; text-align: center; margin-left: 8px; letter-spacing: -.8px; padding-left: 2px; }
.tool-ins { width: 32px; }
.ic-gray { color: #4d5566; }
.tg6 { gap: 6px; }
.tg6 .tool { width: 30px; }
.tg7 { margin-left: auto; gap: 12px; }
.save { color: #a9c6f8; }

/* work area */
.work { flex: 1; display: flex; min-height: 0; overflow: hidden; }
.fields { width: 230px; flex: none; border-right: 3px solid #f1f2f6; padding: 12px 0 0 13px; position: relative; }
.field-search { width: 204px; padding-left: 12px; gap: 4px; }
.flist { margin-top: 10px; padding-left: 10px; height: 556px; overflow: hidden; }
.flist li { height: 32px; display: flex; align-items: center; gap: 6px; position: relative; white-space: nowrap; padding-bottom: 2px; }
.flist li svg { margin-top: 2px; }
.flist li .flag { position: absolute; left: -10px; top: 6px; margin: 0; }
.sb { position: absolute; background: #eef0f4; border-radius: 3px; }
.sb-fields { left: 209px; top: 58px; width: 6px; height: 271px; }
.grip-field { left: 225px; top: 303px; }

.gridpane { width: 432px; flex: none; padding: 12px 12px 0 11px; display: flex; flex-direction: column; }
.gridbox { height: 570px; border: 1px solid #dfe2e8; border-radius: 6px; overflow: hidden; position: relative; flex: none; }
.sheet { border-collapse: separate; border-spacing: 0; table-layout: fixed; width: 407px; }
.c0 { width: 50px; } .c1 { width: 39px; } .c2 { width: 154px; } .c3 { width: 38px; }
.c4 { width: 27px; } .c5 { width: 90px; } .c6 { width: 9px; }
.sheet th, .sheet td { padding: 0; border-right: 1px solid #e4e6ec; border-bottom: 1px solid #e4e6ec; height: 21px; }
.sheet th { background: #fff; font-weight: 400; font-size: 12px; color: #666; text-align: center; }
.sheet tbody th { background: #fff; }
.sheet thead th { background: #f4f6f8; height: 19px; font-size: 12px; }
.sheet .hl { background: #dde8f7; }
.corner { position: relative; }
.corner i { position: absolute; right: 0; bottom: 0; width: 15px; height: 15px; background: #c4c9d2; clip-path: polygon(100% 0, 100% 100%, 0 100%); }
.tail { border-right: 0 !important; }
.sheet td:last-child { border-right: 0; }
.sheet .r1 th, .sheet .r1 td { height: 28px; }
.sheet .r2 th, .sheet .r2 td { height: 33px; }
.sheet tbody td { position: relative; }
.cell { height: 27px; overflow: hidden; position: relative; }
.big { font-size: 14px; line-height: 17px; padding: 0 0 0 4px; word-break: break-all; }
.small { font-size: 12px; line-height: 27px; padding-left: 4px; }
.c1txt { padding-left: 4px; }
.arr { position: absolute; left: 1px; top: 4px; }
.selbox { position: absolute; left: -2px; top: -2px; right: -2px; bottom: -2px; border: 2px solid #2f75f5; z-index: 2; }
.handle { position: absolute; right: -3px; bottom: -3px; width: 4px; height: 4px; background: #2f75f5; z-index: 3; }
.mark::before { content: ""; position: absolute; left: 0; top: 0; width: 7px; height: 7px; background: #f00; clip-path: polygon(0 0, 100% 0, 0 100%); z-index: 1; }
.sb-h { left: 50px; top: 561px; width: 61px; height: 7px; background: rgba(190,195,203,.45); }
.sb-v { right: 0; top: 19px; width: 6px; height: 167px; background: #eef0f4; }
.zoombar { flex: 1; display: flex; align-items: center; justify-content: space-between; padding: 1px 9px 0 6px; }
.zoomctl { display: flex; align-items: center; gap: 9px; }
.zoomsel { width: 80px; height: 24px; border: 1px solid #dfe3ea; border-radius: 6px; display: flex; align-items: center; justify-content: space-between; padding: 0 11px 0 5px; font-size: 12px; color: #2a3c5e; }

.sidetabs { width: 41px; flex: none; border-left: 1px solid #e4e7ee; border-right: 1px solid #e4e7ee; padding-top: 22px; }
.dbl { margin: 0 0 0 14px; }
.stab { height: 68px; display: flex; flex-direction: column; align-items: center; padding-top: 14px; font-size: 12px; line-height: 11.5px; color: #4d5566; }
.sidetabs .stab:nth-child(2) { margin-top: 18px; }
.stab span { margin-top: 5px; text-align: center; }
.stab.on { background: #e9f1ff; color: #3d7bf0; }

.props { width: 270px; flex: none; padding: 18px 0 0 12px; position: relative; overflow: hidden; }
.ph { margin: 0 0 14px; font-size: 14px; line-height: 20px; font-weight: 700; }
.prow { display: flex; align-items: center; margin-bottom: 16px; }
.prow label { width: 88px; flex: none; display: flex; align-items: center; gap: 3px; white-space: nowrap; }
.prow label svg { margin-top: 2px; }
.prow-tight { margin-bottom: 8px; }
.prow-fmt { margin-bottom: 12px; }
.sel {
  width: 147px; height: 32px; flex: none; background: #fff; border: 1px solid #dfe3ea; border-radius: 6px;
  display: flex; align-items: center; justify-content: space-between; padding: 0 8px;
}
.sel svg { color: #555; }
.sel-dis { background: #f2f3f5; color: #878c97; }
.sample { margin: 0 0 0 88px; width: 147px; border: 1px solid #dfe3ea; border-radius: 6px; padding: 0 0 8px; height: 66px; color: #a3a8b3; }
.sample legend { margin-left: 12px; padding: 0 8px; color: #7d838f; line-height: 20px; }
.sample div { line-height: 26px; margin-top: 5px; text-align: center; }
.pdiv { border: 0; height: 1px; background: #e4e7ee; margin: 16px 23px 0 0; }
.pgroup { margin: 22px 0 14px; font-size: 14px; line-height: 20px; font-weight: 700; display: flex; align-items: center; gap: 9px; padding-left: 5px; }
.tri-g { width: 0; height: 0; border-style: solid; border-width: 5px 3.5px 0; border-color: #7d838f transparent transparent; }
.fieldval { display: flex; align-items: center; gap: 4px; padding-left: 3px; }
.seg { width: 147px; height: 32px; display: flex; border: 1px solid #dfe3ea; border-radius: 6px; background: #fff; }
.seg span { flex: 1; display: flex; align-items: center; justify-content: center; }
.seg .seg-on { border: 1px solid #2f6fd6; margin: -1px 0; }
.sb-props { left: 261px; top: 54px; width: 6px; height: 305px; }

.treepane { width: 200px; flex: none; border-left: 1px solid #e4e7ee; position: relative; overflow: hidden; }
.tp-head { height: 42px; padding: 14px 13px 0 0; display: flex; justify-content: flex-end; align-items: flex-start; color: #3d7bf0; line-height: 20px; }
.tp-head i { width: 1px; height: 16px; background: #e4e7ee; margin: 2px 8px; }
.nodes { padding-left: 12px; height: 580px; overflow: hidden; }
.node-first { margin-top: -20px; }
.node { width: 164px; height: 28px; border: 1px solid #3b7bf0; border-radius: 6px; display: flex; align-items: center; background: #fff; overflow: hidden; }
.nic { width: 25px; height: 26px; background: #dbe8ff; color: #2f75f5; display: flex; align-items: center; justify-content: center; flex: none; border-radius: 5px 0 0 5px; }
.nic-num { font-size: 10px; font-weight: 700; line-height: 10px; letter-spacing: -.3px; align-items: flex-end; padding-bottom: 6px; position: relative; }
.nic-num::before { content: ""; position: absolute; left: 5px; right: 5px; top: 7px; height: 1px; background: #2f75f5; }
.ntx { margin-left: 7px; white-space: nowrap; }
.nd { margin-left: auto; margin-right: 11px; color: #1d2536; }
.node-on { background: #2f75f5; box-shadow: inset 0 0 0 1px #7ea9f8; color: #fff; font-weight: 700; }
.node-on .nic { background: transparent; color: #fff; }
.node-on .nd { color: #fff; }
.link { width: 2px; height: 28px; background: #8fb4f8; margin-left: 12px; }
.sb-tree { left: 190px; top: 484px; width: 6px; height: 135px; }
```
